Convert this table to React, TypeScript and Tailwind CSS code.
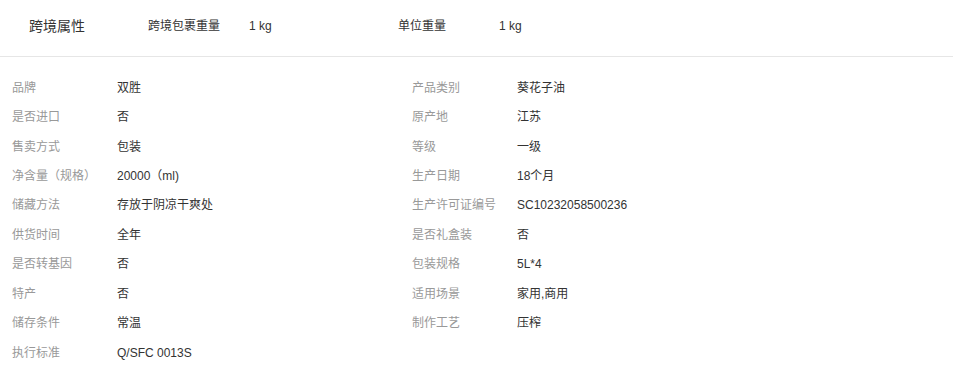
const attrs: [string, string][] = [
  ["品牌", "双胜"],
  ["产品类别", "葵花子油"],
  ["是否进口", "否"],
  ["原产地", "江苏"],
  ["售卖方式", "包装"],
  ["等级", "一级"],
  ["净含量（规格）", "20000（ml)"],
  ["生产日期", "18个月"],
  ["储藏方法", "存放于阴凉干爽处"],
  ["生产许可证编号", "SC10232058500236"],
  ["供货时间", "全年"],
  ["是否礼盒装", "否"],
  ["是否转基因", "否"],
  ["包装规格", "5L*4"],
  ["特产", "否"],
  ["适用场景", "家用,商用"],
  ["储存条件", "常温"],
  ["制作工艺", "压榨"],
  ["执行标准", "Q/SFC 0013S"],
];

const crossBorder: [string, string][] = [
  ["跨境包裹重量", "1 kg"],
  ["单位重量", "1 kg"],
];

export default function App() {
  return (
    <div
      className="w-[953px] bg-white text-[12px] text-[#333]"
      style={{ fontFamily: '"Liberation Sans", Arial, "Noto Sans CJK SC", sans-serif' }}
    >
      {/* cross-border block */}
      <div className="flex h-[57px] items-center border-b border-[#e6e6e6] pb-[4px] pl-[29px]">
        <div className="w-[119px] text-[14px] text-[#333]">跨境属性</div>
        {crossBorder.map(([k, v]) => (
          <div key={k} className="flex w-[250px] items-center">
            <span className="w-[101px] text-[#333]">{k}</span>
            <span className="text-[#333]">{v}</span>
          </div>
        ))}
      </div>

      {/* product attributes */}
      <div className="grid w-[812px] grid-cols-2 pl-[12px] pt-[16px]">
        {attrs.map(([k, v]) => (
          <div key={k} className="flex h-[29.45px] items-center">
            <span className="w-[105px] shrink-0 text-[#999]">{k}</span>
            <span className="text-[#333]">{v}</span>
          </div>
        ))}
      </div>
    </div>
  );
}
